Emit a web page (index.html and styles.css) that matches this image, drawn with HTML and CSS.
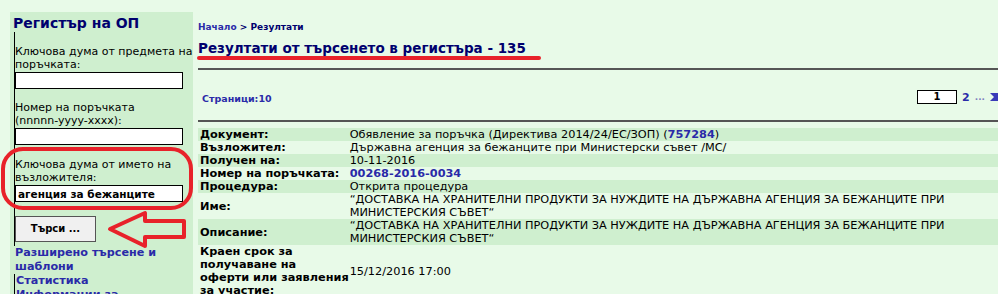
FILE: index.html
```html
<!DOCTYPE html>
<html>
    <head>
        <meta http-equiv="Content-Type" content="text/html; charset=UTF-8">
        <title>Регистър на ОП</title>
        <link rel="stylesheet" href="styles.css">
    </head>
    <body>
        <div id="page">
            <section id="sidebar">
                <h3 class="side-title">Регистър на ОП</h3>
                <form id="search">
                    <label class="fld">Ключова дума от предмета на<br>поръчката:
                        <input type="text">
                    </label>
                    <label class="fld">Номер на поръчката<br>(nnnnn-yyyy-xxxx):
                        <input type="text">
                    </label>
                    <label class="fld">Ключова дума от името на<br>възложителя:
                        <input type="text" class="filled" value="агенция за бежанците">
                    </label>
                    <span class="btn">Търси ...</span>
                </form>
                <ul class="side-links">
                    <li><a href="#">Разширено търсене и шаблони</a></li>
                    <li class="mark"><a href="#">Статистика</a></li>
                    <li class="mark"><a href="#">Информации за</a></li>
                </ul>
            </section>
            <section id="main">
                <div class="crumbs"><a href="#">Начало</a> &gt; Резултати</div>
                <h2 class="res-title">Резултати от търсенето в регистъра - 135</h2>
                <div class="pager">
                    <span class="pages">Страници:10</span>
                    <span class="pnav">
                        <span class="cur">1</span>
                        <a href="#">2</a>
                        <span class="dots">...</span>
                        <span class="next"></span>
                    </span>
                </div>
                <table id="result">
                    <tr class="dk"><th>Документ:</th><td>Обявление за поръчка (Директива 2014/24/ЕС/ЗОП) (<a href="#">757284</a>)</td></tr>
                    <tr><th>Възложител:</th><td>Държавна агенция за бежанците при Министерски съвет /МС/</td></tr>
                    <tr class="dk"><th>Получен на:</th><td>10-11-2016</td></tr>
                    <tr><th>Номер на поръчката:</th><td><a href="#">00268-2016-0034</a></td></tr>
                    <tr class="dk"><th>Процедура:</th><td>Открита процедура</td></tr>
                    <tr><th>Име:</th><td>“ДОСТАВКА НА ХРАНИТЕЛНИ ПРОДУКТИ ЗА НУЖДИТЕ НА ДЪРЖАВНА АГЕНЦИЯ ЗА БЕЖАНЦИТЕ ПРИ<br>МИНИСТЕРСКИЯ СЪВЕТ“</td></tr>
                    <tr class="dk"><th>Описание:</th><td>“ДОСТАВКА НА ХРАНИТЕЛНИ ПРОДУКТИ ЗА НУЖДИТЕ НА ДЪРЖАВНА АГЕНЦИЯ ЗА БЕЖАНЦИТЕ ПРИ<br>МИНИСТЕРСКИЯ СЪВЕТ“</td></tr>
                    <tr><th class="wrap">Краен срок за<br>получаване на<br>оферти или заявления<br>за участие:</th><td>15/12/2016 17:00</td></tr>
                </table>
            </section>
        </div>
        <!-- red marks drawn over the screenshot -->
        <svg class="marks" width="998" height="294" viewBox="0 0 998 294">
            <rect x="3" y="149" width="188" height="59" rx="20" ry="20" fill="none" stroke="#e8222a" stroke-width="4"/>
            <path d="M110 229 L145 213 L145 221 L184 221 L184 237 L145 237 L145 246 Z" fill="none" stroke="#e8222a" stroke-width="4" stroke-linejoin="round"/>
            <line x1="199" y1="58" x2="539" y2="58" stroke="#e8222a" stroke-width="4" stroke-linecap="round"/>
        </svg>
    </body>
</html>
```

FILE: styles.css
```css
body {
    margin: 0;
    background: #e8fae8;
    font-family: "DejaVu Sans", Verdana, sans-serif;
    font-size: 11px;
    color: #000;
    overflow: hidden;
}
#page {
    display: flex;
    align-items: flex-start;
    padding: 12px 0 0 10px;
}
#sidebar {
    width: 183px;
    flex: none;
    background: #cfefcf;
    padding-bottom: 40px;
}
.side-title {
    margin: 0;
    padding: 3px 3px 1px 3px;
    font-size: 14px;
    color: #00006e;
    line-height: 16px;
}
#search {
    margin-left: 4px;
    border-left: 1px solid #000;
    padding-top: 13px;
    display: flex;
    flex-direction: column;
}
.fld {
    display: block;
    white-space: nowrap;
    line-height: 13px;
    font-size: 11px;
    margin-bottom: 12px;
}
.fld input {
    display: block;
    box-sizing: border-box;
    width: 168px;
    height: 17px;
    margin: 1px 0 0 0;
    border: 1.5px solid #000;
    background: #fff;
    font-family: "DejaVu Sans", Verdana, sans-serif;
    font-size: 10.5px;
    font-weight: bold;
    padding: 0 2px;
}
#search .fld:nth-child(2) {
    margin-bottom: 13px;
}
#search .fld:nth-child(3) {
    margin-bottom: 14px;
}
.btn {
    align-self: flex-start;
    box-sizing: border-box;
    width: 81px;
    height: 26px;
    border: 1px solid #555;
    background: #f0f0f0;
    font-size: 10px;
    font-weight: bold;
    line-height: 24px;
    text-align: center;
    margin-bottom: 4px;
}
.side-links {
    list-style: none;
    margin: 0;
    padding: 0;
}
.side-links li {
    margin-left: 4px;
    padding-left: 1px;
    line-height: 14px;
}
.side-links li.mark {
    border-left: 1px solid #000;
}
.side-links a {
    color: #2a2aa8;
    font-weight: bold;
    font-size: 11.2px;
    text-decoration: none;
}
#main {
    flex: 1;
    margin-left: 5px;
}
.crumbs {
    font-size: 9px;
    font-weight: bold;
    color: #00006e;
    padding-top: 9px;
    line-height: 12px;
}
.crumbs a {
    color: #2a2aa8;
    text-decoration: none;
}
.res-title {
    margin: 6px 0 0 0;
    font-size: 13.5px;
    color: #00006e;
    line-height: 18px;
    padding-bottom: 11px;
    border-bottom: 2px solid #555;
}
.pager {
    display: flex;
    justify-content: space-between;
    align-items: center;
    height: 52px;
    padding-top: 4px;
    box-sizing: border-box;
    border-bottom: 2px solid #555;
}
.pages {
    font-size: 9.5px;
    font-weight: bold;
    color: #2a2aa8;
    padding-left: 4px;
    margin-top: 2px;
}
.pnav {
    display: flex;
    align-items: center;
    gap: 5px;
    margin-right: -2px;
    font-size: 11px;
    font-weight: bold;
}
.cur {
    box-sizing: border-box;
    width: 40px;
    height: 14px;
    border: 1.5px solid #000;
    background: #fff;
    text-align: center;
    line-height: 11px;
    font-size: 10px;
}
.pnav a {
    color: #2a2aa8;
    text-decoration: none;
}
.dots {
    color: #8080c0;
    font-size: 9px;
}
.next {
    width: 0;
    height: 0;
    border-top: 4px solid #3a3ab8;
    border-bottom: 4px solid #3a3ab8;
    border-left: 4px solid #e8fae8;
    border-right: 6px solid #3a3ab8;
}
#result {
    width: 100%;
    border-collapse: collapse;
    margin-top: 6px;
}
#result th, #result td {
    padding: 0;
    line-height: 13px;
    vertical-align: middle;
    text-align: left;
    font-size: 11.3px;
}
#result th {
    width: 144px;
    padding-left: 2px;
    white-space: nowrap;
    font-weight: bold;
}
#result td {
    padding-left: 1px;
}
#result tr.dk {
    background: #cfefcf;
}
#result a {
    color: #2a2aa8;
    font-weight: bold;
    text-decoration: none;
}
.marks {
    position: absolute;
    left: 0;
    top: 0;
    pointer-events: none;
}
```
